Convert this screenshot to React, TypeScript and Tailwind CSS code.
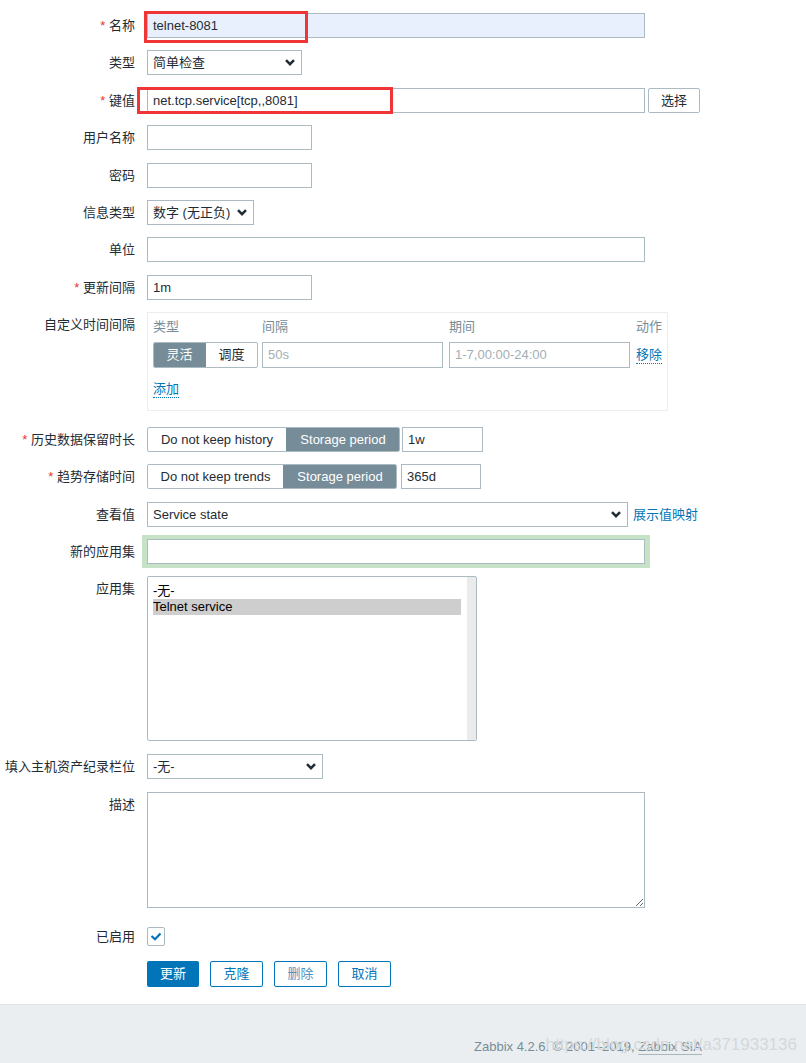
import React from "react";

const Chevron = () => (
  <svg width="10" height="7" viewBox="0 0 10 7" className="shrink-0">
    <polyline points="1,1.2 5,5.2 9,1.2" fill="none" stroke="#1f2c33" strokeWidth="2.5" />
  </svg>
);

interface RowProps {
  label?: string;
  required?: boolean;
  mt: string;
  children: React.ReactNode;
}

const Row = ({ label, required, mt, children }: RowProps) => (
  <div className={`flex items-start ${mt}`}>
    <div className="w-[135px] shrink-0 text-right h-[25px] leading-[25px] whitespace-nowrap">
      {required && <span className="text-[#e33734]">* </span>}
      {label}
    </div>
    <div className="ml-[12px] flex items-center">{children}</div>
  </div>
);

const TextBox = ({ w, value, className = "" }: { w: string; value?: string; className?: string }) => (
  <div className={`${w} h-[25px] border border-[#acbbc2] px-[5px] leading-[23px] whitespace-nowrap overflow-hidden ${className || "bg-white"}`}>
    {value}
  </div>
);

const SelectBox = ({ w, value }: { w: string; value: string }) => (
  <div className={`${w} h-[25px] border border-[#acbbc2] bg-white pl-[5px] pr-[6px] flex items-center justify-between`}>
    <span className="whitespace-nowrap">{value}</span>
    <Chevron />
  </div>
);

export default function App() {
  return (
    <div className="relative w-[806px] min-h-[1063px] bg-white text-[13px] text-[#1f2c33] font-['Liberation_Sans','Noto_Sans_CJK_SC',sans-serif]">
      <div className="pt-[13px]">
        <Row label="名称" required mt="mt-0">
          <TextBox w="w-[498px]" value="telnet-8081" className="bg-[#e8f0fe]" />
        </Row>
        <Row label="类型" mt="mt-[12px]">
          <SelectBox w="w-[155px]" value="简单检查" />
        </Row>
        <Row label="键值" required mt="mt-[13px]">
          <TextBox w="w-[498px]" value="net.tcp.service[tcp,,8081]" />
          <div className="ml-[3px] w-[52px] h-[25px] border border-[#acbbc2] rounded-[2px] bg-white text-center leading-[23px]">
            选择
          </div>
        </Row>
        <Row label="用户名称" mt="mt-[12px]">
          <TextBox w="w-[165px]" />
        </Row>
        <Row label="密码" mt="mt-[13px]">
          <TextBox w="w-[165px]" />
        </Row>
        <Row label="信息类型" mt="mt-[12px]">
          <SelectBox w="w-[107px]" value="数字 (无正负)" />
        </Row>
        <Row label="单位" mt="mt-[12px]">
          <TextBox w="w-[498px]" />
        </Row>
        <Row label="更新间隔" required mt="mt-[13px]">
          <TextBox w="w-[165px]" value="1m" />
        </Row>
        <Row label="自定义时间间隔" mt="mt-[12px]">
          <div className="w-[521px] h-[99px] border border-[#ebeef0] px-[5px] pt-[5px]">
            <div className="flex h-[18px] leading-[18px] text-[#768d99]">
              <div className="w-[109px]">类型</div>
              <div className="w-[187px]">间隔</div>
              <div className="w-[187px]">期间</div>
              <div>动作</div>
            </div>
            <div className="flex items-center mt-[6px]">
              <div className="flex w-[105px] h-[26px] border border-[#acbbc2] rounded-[2px] overflow-hidden">
                <div className="w-[53px] -my-px -ml-px bg-[#768d99] text-white text-center leading-[26px]">灵活</div>
                <div className="flex-1 text-center leading-[24px]">调度</div>
              </div>
              <div className="ml-[4px] w-[181px] h-[26px] border border-[#acbbc2] px-[5px] leading-[24px] text-[#a3aeb4]">50s</div>
              <div className="ml-[6px] w-[181px] h-[26px] border border-[#acbbc2] px-[5px] leading-[24px] text-[#a3aeb4]">1-7,00:00-24:00</div>
              <div className="ml-[6px] text-[#0275b8] leading-[17px] border-b border-dotted border-[#0275b8]">移除</div>
            </div>
            <div className="mt-[12px] flex">
              <span className="text-[#0275b8] leading-[17px] border-b border-dotted border-[#0275b8]">添加</span>
            </div>
          </div>
        </Row>
        <Row label="历史数据保留时长" required mt="mt-[16px]">
          <div className="flex h-[25px] border border-[#acbbc2] rounded-[2px] overflow-hidden">
            <div className="w-[138px] text-center leading-[23px] whitespace-nowrap">Do not keep history</div>
            <div className="w-[114px] -my-px -mr-px bg-[#768d99] text-white text-center leading-[25px] whitespace-nowrap">Storage period</div>
          </div>
          <TextBox w="ml-[2px] w-[81px]" value="1w" />
        </Row>
        <Row label="趋势存储时间" required mt="mt-[12px]">
          <div className="flex h-[25px] border border-[#acbbc2] rounded-[2px] overflow-hidden">
            <div className="w-[135px] text-center leading-[23px] whitespace-nowrap">Do not keep trends</div>
            <div className="w-[114px] -my-px -mr-px bg-[#768d99] text-white text-center leading-[25px] whitespace-nowrap">Storage period</div>
          </div>
          <TextBox w="ml-[4px] w-[80px]" value="365d" />
        </Row>
        <Row label="查看值" mt="mt-[13px]">
          <SelectBox w="w-[481px]" value="Service state" />
          <span className="ml-[5px] text-[#0275b8] whitespace-nowrap">展示值映射</span>
        </Row>
        <Row label="新的应用集" mt="mt-[12px]">
          <div className="w-[498px] h-[25px] border border-[#acbbc2] bg-white shadow-[-1px_0_0_4px_#c6e3c8,1px_0_0_4px_#c6e3c8]" />
        </Row>
        <Row label="应用集" mt="mt-[12px]">
          <div className="w-[330px] h-[165px] border border-[#acbbc2] rounded-[2px] flex bg-white">
            <div className="flex-1 pt-[6px] pl-[5px] pr-[6px] text-black">
              <div className="h-[16px] leading-[16px]">-无-</div>
              <div className="h-[16px] leading-[16px] bg-[#cecece]">Telnet service</div>
            </div>
            <div className="w-[9px] bg-[#ebebeb]" />
          </div>
        </Row>
        <Row label="填入主机资产纪录栏位" mt="mt-[13px]">
          <SelectBox w="w-[176px]" value="-无-" />
        </Row>
        <Row label="描述" mt="mt-[13px]">
          <textarea
            readOnly
            className="block w-[498px] h-[116px] border border-[#acbbc2] bg-white outline-none"
          />
        </Row>
        <Row label="已启用" mt="mt-[16px]">
          <div className="mt-[3px] w-[18px] h-[19px] border border-[#acbbc2] rounded-[2px] bg-white flex items-center justify-center">
            <svg width="12" height="9" viewBox="0 0 12 9">
              <polyline points="1.5,4 5,7.2 10.5,1.5" fill="none" stroke="#0275b8" strokeWidth="2.2" />
            </svg>
          </div>
        </Row>
        <Row mt="mt-[12px]">
          <div className="flex gap-[11px]">
            <div className="w-[52px] h-[26px] rounded-[2px] bg-[#0275b8] text-white text-center leading-[26px]">更新</div>
            <div className="w-[53px] h-[26px] rounded-[2px] border border-[#0275b8] text-[#0275b8] text-center leading-[24px]">克隆</div>
            <div className="w-[53px] h-[26px] rounded-[2px] border border-[#0275b8] text-[#4f93c4] text-center leading-[24px]">删除</div>
            <div className="w-[53px] h-[26px] rounded-[2px] border border-[#0275b8] text-[#0275b8] text-center leading-[24px]">取消</div>
          </div>
        </Row>
      </div>

      <footer className="relative mt-[17px] h-[59px] bg-[#ebeef0] border-t border-[#dfe3e6]">
        <div className="pl-[474px] pt-[34px] leading-[16px] text-[#768d99] whitespace-nowrap">
          Zabbix 4.2.6. © 2001–2019,{" "}
          <span className="underline underline-offset-[3px] decoration-[#a9b6bd]">Zabbix SIA</span>
        </div>
        <div className="absolute right-[9px] top-[30px] text-[17px] leading-[20px] text-[#d3d8db] whitespace-nowrap">
          https://blog.csdn.net/a371933136
        </div>
      </footer>

      <div className="absolute left-[144px] top-[11px] w-[164px] h-[32px] border-[3px] border-[#ef3535]" />
      <div className="absolute left-[137px] top-[87px] w-[256px] h-[27px] border-[3px] border-[#ef3535]" />
    </div>
  );
}
